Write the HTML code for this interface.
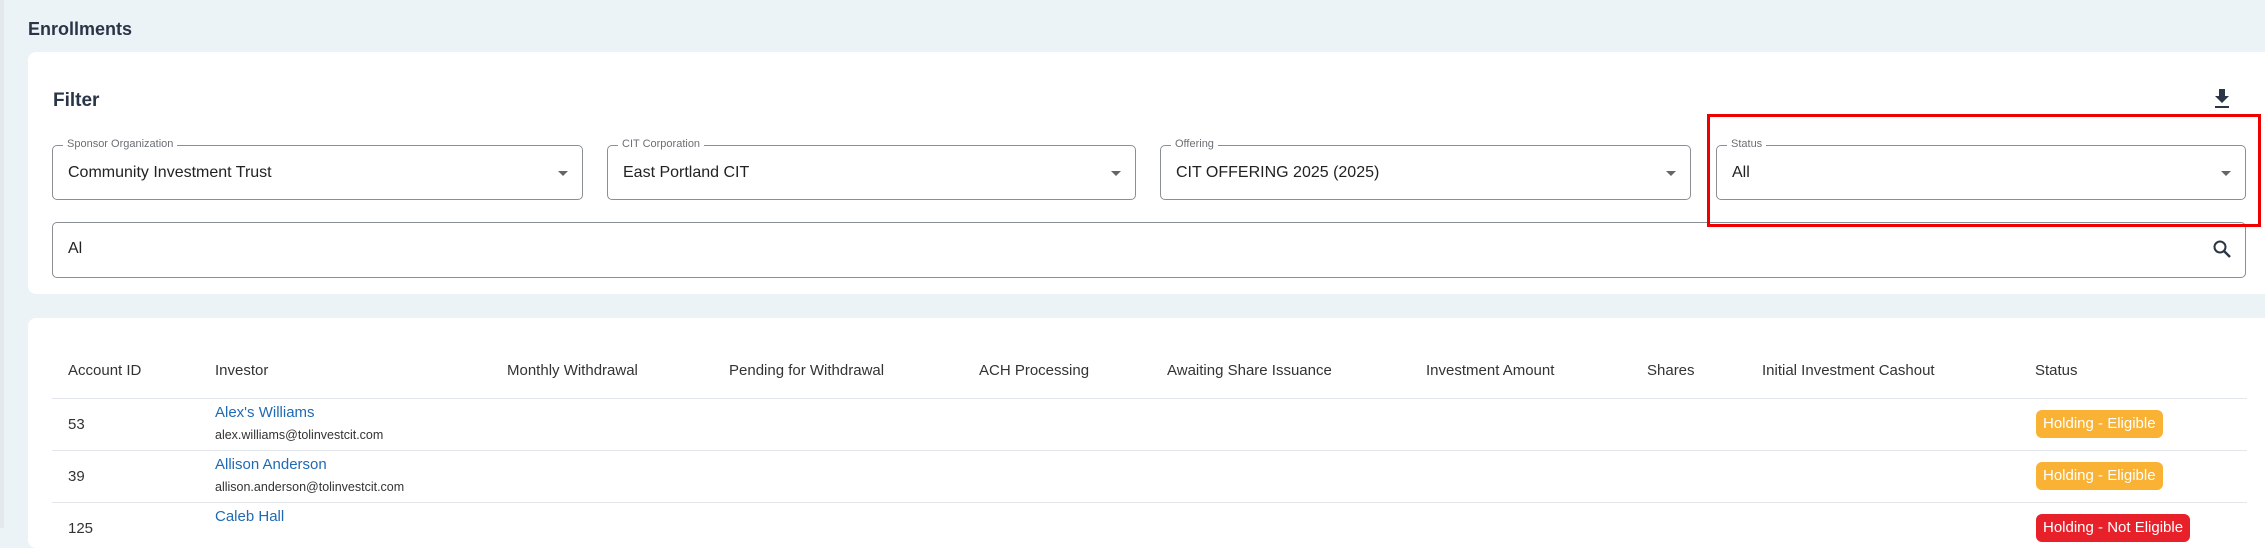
<!DOCTYPE html>
<html><head><meta charset="utf-8"><style>
*{box-sizing:border-box;margin:0;padding:0}
body{width:2265px;height:528px;overflow:hidden;background:#ebf3f7;font-family:"Liberation Sans",sans-serif;color:#2a3547;position:relative}
.a{position:absolute;white-space:nowrap}
.card{position:absolute;background:#fff;border-radius:8px}
.sel{position:absolute;border:1px solid #8a8f95;border-radius:5px;height:55px;top:145px}
.sel .lb{position:absolute;top:-8px;left:10px;background:#fff;padding:0 4px;font-size:11px;color:#6b6f75}
.sel .v{position:absolute;left:15px;top:18px;font-size:16px;color:#222}
.sel .ar{position:absolute;right:14px;top:25px;width:0;height:0;border-left:5px solid transparent;border-right:5px solid transparent;border-top:5px solid #666}
.th{position:absolute;top:362px;font-size:15px;color:#333}
.hl{position:absolute;left:52px;width:2195px;height:1px;background:#e3e6ea}
.nm{position:absolute;left:215px;font-size:15px;color:#1f6ab5}
.em{position:absolute;left:215px;font-size:12.5px;color:#333}
.id{position:absolute;left:68px;font-size:15px;color:#333}
.bd{position:absolute;left:2036px;height:28px;border-radius:6px;color:#fff;font-size:15px;padding:0 7px;line-height:28px}
</style></head><body>
<div class="a" style="left:0;top:0;width:4px;height:528px;background:#e2e8ec"></div>
<div class="a" style="left:28px;top:19px;font-size:18px;font-weight:bold;color:#2a3547">Enrollments</div>
<div class="card" style="left:28px;top:52px;width:2250px;height:242px"></div>
<div class="a" style="left:53px;top:90px;font-size:19px;font-weight:bold">Filter</div>
<svg class="a" style="left:2213px;top:89px" width="18" height="20" viewBox="0 0 18 20"><path d="M6 0h6v7h4l-7 7-7-7h4z" fill="#2a3547"/><rect x="2" y="17" width="14" height="2" fill="#2a3547"/></svg>
<div class="sel" style="left:52px;width:531px"><span class="lb">Sponsor Organization</span><span class="v">Community Investment Trust</span><span class="ar"></span></div>
<div class="sel" style="left:607px;width:529px"><span class="lb">CIT Corporation</span><span class="v">East Portland CIT</span><span class="ar"></span></div>
<div class="sel" style="left:1160px;width:531px"><span class="lb">Offering</span><span class="v">CIT OFFERING 2025 (2025)</span><span class="ar"></span></div>
<div class="sel" style="left:1716px;width:530px"><span class="lb">Status</span><span class="v">All</span><span class="ar"></span></div>
<div class="a" style="left:52px;top:222px;width:2194px;height:56px;border:1px solid #8a8f95;border-radius:5px"></div>
<div class="a" style="left:68px;top:240px;font-size:16px;color:#222">Al</div>
<svg class="a" style="left:2212px;top:239px" width="20" height="20" viewBox="0 0 20 20"><circle cx="8" cy="8" r="5.5" stroke="#2a3547" stroke-width="2" fill="none"/><path d="M12 12l6 6" stroke="#2a3547" stroke-width="2.4"/></svg>
<div class="a" style="left:1707px;top:114px;width:554px;height:113px;border:3px solid #ee0000"></div>
<div class="card" style="left:28px;top:318px;width:2250px;height:230px"></div>
<div class="th" style="left:68px">Account ID</div>
<div class="th" style="left:215px">Investor</div>
<div class="th" style="left:507px">Monthly Withdrawal</div>
<div class="th" style="left:729px">Pending for Withdrawal</div>
<div class="th" style="left:979px">ACH Processing</div>
<div class="th" style="left:1167px">Awaiting Share Issuance</div>
<div class="th" style="left:1426px">Investment Amount</div>
<div class="th" style="left:1647px">Shares</div>
<div class="th" style="left:1762px">Initial Investment Cashout</div>
<div class="th" style="left:2035px">Status</div>
<div class="hl" style="top:398px"></div>
<div class="id" style="top:416px">53</div>
<div class="nm" style="top:404px">Alex's Williams</div>
<div class="em" style="top:428px">alex.williams@tolinvestcit.com</div>
<div class="bd" style="top:410px;background:#f9b233">Holding - Eligible</div>
<div class="hl" style="top:450px"></div>
<div class="id" style="top:468px">39</div>
<div class="nm" style="top:456px">Allison Anderson</div>
<div class="em" style="top:480px">allison.anderson@tolinvestcit.com</div>
<div class="bd" style="top:462px;background:#f9b233">Holding - Eligible</div>
<div class="hl" style="top:502px"></div>
<div class="id" style="top:520px">125</div>
<div class="nm" style="top:508px">Caleb Hall</div>
<div class="bd" style="top:514px;background:#e8202a">Holding - Not Eligible</div>
</body></html>
